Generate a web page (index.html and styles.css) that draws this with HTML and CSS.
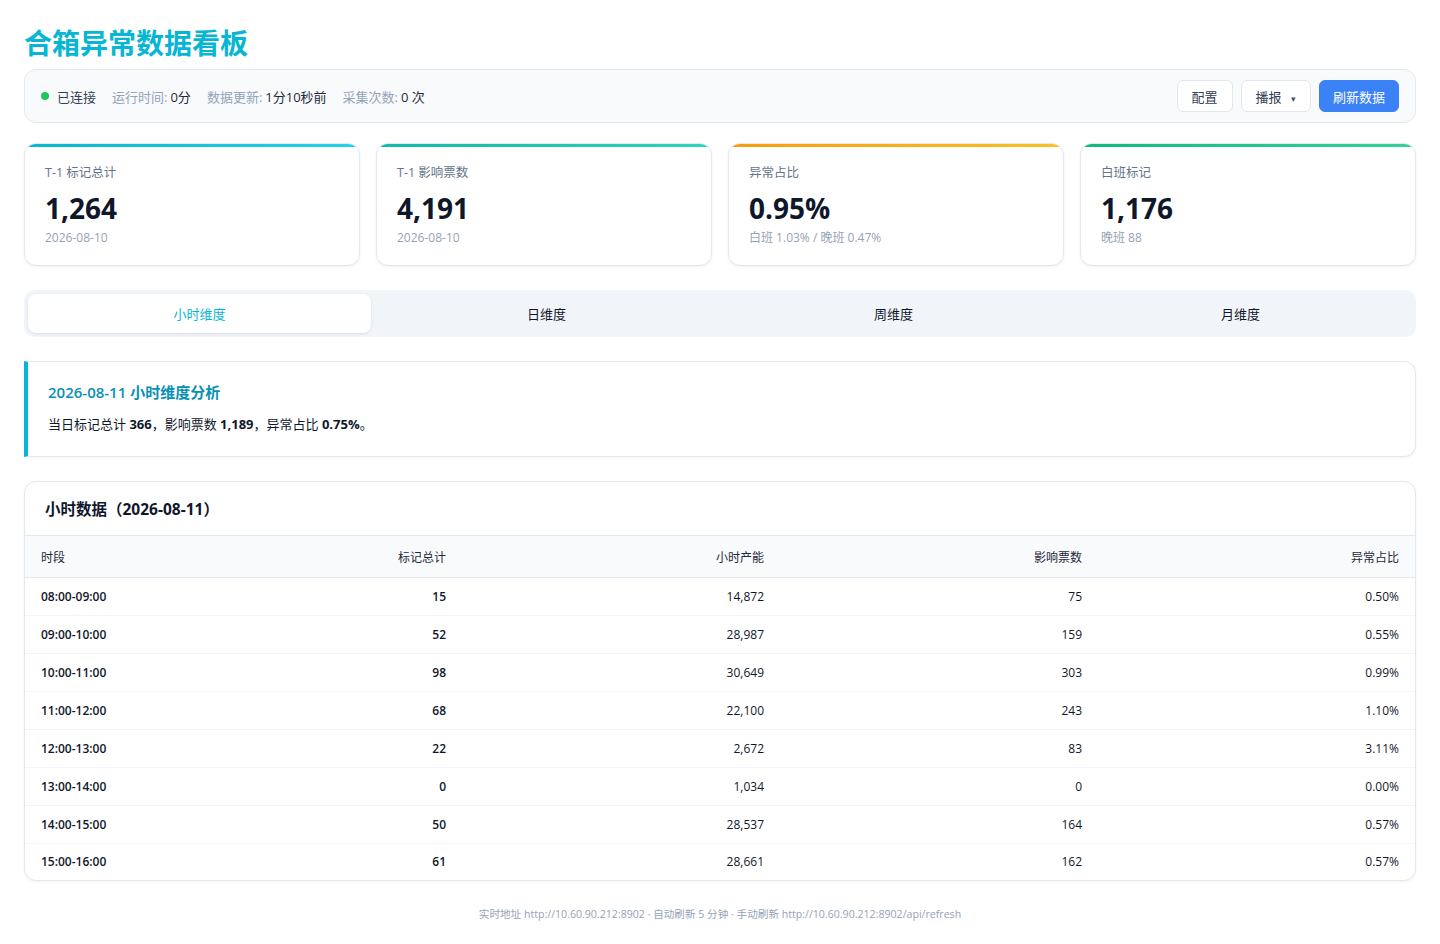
FILE: index.html
```html
<!DOCTYPE html>
<html lang="zh-CN">
<head>
<meta charset="utf-8">
<title>合箱异常数据看板</title>
<link rel="stylesheet" href="styles.css">
</head>
<body>
<div class="page">
  <h1 class="title">合箱异常数据看板</h1>

  <div class="status-bar">
    <div class="status-left">
      <span class="status-item"><span class="dot"></span><span class="conn">已连接</span></span>
      <span class="status-item"><span class="muted">运行时间:</span> <span class="val">0分</span></span>
      <span class="status-item"><span class="muted">数据更新:</span> <span class="val">1分10秒前</span></span>
      <span class="status-item"><span class="muted">采集次数:</span> <span class="val">0 次</span></span>
    </div>
    <div class="status-right">
      <button class="btn">配置</button>
      <button class="btn">播报 <span class="caret">▾</span></button>
      <button class="btn btn-primary">刷新数据</button>
    </div>
  </div>

  <div class="cards">
    <div class="card card-cyan">
      <div class="card-label">T-1 标记总计</div>
      <div class="card-value">1,264</div>
      <div class="card-sub">2026-08-10</div>
    </div>
    <div class="card card-teal">
      <div class="card-label">T-1 影响票数</div>
      <div class="card-value">4,191</div>
      <div class="card-sub">2026-08-10</div>
    </div>
    <div class="card card-amber">
      <div class="card-label">异常占比</div>
      <div class="card-value">0.95%</div>
      <div class="card-sub">白班 1.03% / 晚班 0.47%</div>
    </div>
    <div class="card card-green">
      <div class="card-label">白班标记</div>
      <div class="card-value">1,176</div>
      <div class="card-sub">晚班 88</div>
    </div>
  </div>

  <div class="tabs">
    <div class="tab active">小时维度</div>
    <div class="tab">日维度</div>
    <div class="tab">周维度</div>
    <div class="tab">月维度</div>
  </div>

  <div class="analysis">
    <div class="analysis-title">2026-08-11 小时维度分析</div>
    <div class="analysis-text">当日标记总计 <b>366</b>，影响票数 <b>1,189</b>，异常占比 <b>0.75%</b>。</div>
  </div>

  <div class="table-card">
    <div class="table-title">小时数据（2026-08-11）</div>
    <table class="data">
      <colgroup>
        <col class="c1"><col class="c2"><col class="c3"><col class="c4"><col class="c5">
      </colgroup>
      <thead>
        <tr><th class="l">时段</th><th>标记总计</th><th>小时产能</th><th>影响票数</th><th>异常占比</th></tr>
      </thead>
      <tbody>
        <tr><td class="l b">08:00-09:00</td><td class="b">15</td><td>14,872</td><td>75</td><td>0.50%</td></tr>
        <tr><td class="l b">09:00-10:00</td><td class="b">52</td><td>28,987</td><td>159</td><td>0.55%</td></tr>
        <tr><td class="l b">10:00-11:00</td><td class="b">98</td><td>30,649</td><td>303</td><td>0.99%</td></tr>
        <tr><td class="l b">11:00-12:00</td><td class="b">68</td><td>22,100</td><td>243</td><td>1.10%</td></tr>
        <tr><td class="l b">12:00-13:00</td><td class="b">22</td><td>2,672</td><td>83</td><td>3.11%</td></tr>
        <tr><td class="l b">13:00-14:00</td><td class="b">0</td><td>1,034</td><td>0</td><td>0.00%</td></tr>
        <tr><td class="l b">14:00-15:00</td><td class="b">50</td><td>28,537</td><td>164</td><td>0.57%</td></tr>
        <tr><td class="l b">15:00-16:00</td><td class="b">61</td><td>28,661</td><td>162</td><td>0.57%</td></tr>
      </tbody>
    </table>
  </div>

  <div class="footer">实时地址 http://10.60.90.212:8902 · 自动刷新 5 分钟 · 手动刷新 http://10.60.90.212:8902/api/refresh</div>
</div>
</body>
</html>
```

FILE: styles.css
```css
* { box-sizing: border-box; }
html, body { margin: 0; padding: 0; background: #ffffff; }
body {
  font-family: "Open Sans", "Noto Sans CJK SC", sans-serif;
  color: #0f172a;
  font-size: 13px;
}
.page { padding: 24px 24px 20px; }

.title {
  margin: 0 0 7px;
  font-size: 28px;
  line-height: 38px;
  font-weight: 700;
  color: #06b6d4;
}

.status-bar {
  display: flex;
  align-items: center;
  justify-content: space-between;
  height: 54px;
  padding: 0 16px;
  background: #f8fafc;
  border: 1px solid #e2e8f0;
  border-radius: 12px;
}
.status-left { display: flex; align-items: center; gap: 16px; font-size: 13px; }
.status-item { display: inline-flex; align-items: center; gap: 3px; }
.dot { width: 8px; height: 8px; border-radius: 50%; background: #22c55e; margin-right: 5px; }
.conn { color: #334155; }
.muted { color: #94a3b8; }
.val { color: #1e293b; }
.status-right { display: flex; gap: 8px; }
.btn {
  font-family: inherit;
  font-size: 13px;
  height: 32px;
  padding: 0 14px;
  border: 1px solid #e2e8f0;
  background: #ffffff;
  color: #334155;
  border-radius: 6px;
}
.caret { font-size: 9px; color: #475569; margin-left: 6px; }
.btn-primary { background: #3b82f6; border-color: #3b82f6; color: #ffffff; padding: 0 13px; }

.cards {
  display: grid;
  grid-template-columns: repeat(4, 1fr);
  gap: 16px;
  margin-top: 20px;
}
.card {
  position: relative;
  height: 123px;
  padding: 20px 20px;
  background: #ffffff;
  border: 1px solid #e2e8f0;
  border-radius: 12px;
  overflow: hidden;
  box-shadow: 0 1px 3px rgba(15, 23, 42, 0.06);
}
.card::before {
  content: "";
  position: absolute;
  left: 0; right: 0; top: 0;
  height: 3px;
}
.card-cyan::before { background: linear-gradient(90deg, #06b6d4, #22d3ee); }
.card-teal::before { background: linear-gradient(90deg, #14b8a6, #2dd4bf); }
.card-amber::before { background: linear-gradient(90deg, #f59e0b, #fbbf24); }
.card-green::before { background: linear-gradient(90deg, #10b981, #34d399); }
.card-label { font-size: 12.5px; line-height: 18px; color: #64748b; }
.card-value { font-size: 28px; line-height: 38px; font-weight: 700; color: #0f172a; margin-top: 7px; }
.card-sub { font-size: 12px; line-height: 18px; color: #94a3b8; margin-top: 2px; }

.tabs {
  display: grid;
  grid-template-columns: repeat(4, 1fr);
  gap: 4px;
  padding: 4px;
  margin-top: 24px;
  background: #f1f5f9;
  border-radius: 10px;
}
.tab {
  height: 39px;
  display: flex;
  align-items: center;
  justify-content: center;
  font-size: 13px;
  color: #0f172a;
  border-radius: 8px;
}
.tab.active {
  background: #ffffff;
  color: #06b6d4;
  box-shadow: 0 1px 3px rgba(15, 23, 42, 0.1);
}

.analysis {
  margin-top: 24px;
  height: 96px;
  padding: 19px 20px;
  background: #ffffff;
  border: 1px solid #e2e8f0;
  border-left: 4px solid #06b6d4;
  border-radius: 0 12px 12px 0;
  box-shadow: 0 1px 3px rgba(15, 23, 42, 0.05);
}
.analysis-title { font-size: 15px; line-height: 22px; font-weight: 600; color: #0891b2; }
.analysis-text { font-size: 13px; line-height: 20px; color: #0f172a; margin-top: 11px; }
.analysis-text b { font-weight: 700; }

.table-card {
  margin-top: 24px;
  background: #ffffff;
  border: 1px solid #e2e8f0;
  border-radius: 12px;
  overflow: hidden;
  box-shadow: 0 1px 3px rgba(15, 23, 42, 0.05);
}
.table-title {
  height: 53px;
  display: flex;
  align-items: center;
  padding: 0 20px;
  font-size: 15.5px;
  font-weight: 700;
  color: #0f172a;
}
.data {
  width: 100%;
  border-collapse: collapse;
  table-layout: fixed;
  font-size: 12px;
}
.c1 { width: 119px; }
.c2, .c3, .c4 { width: 318px; }
.c5 { width: auto; }
.data th {
  height: 42px;
  padding: 0 16px;
  text-align: right;
  font-weight: 400;
  color: #1e293b;
  background: #f8fafc;
  border-top: 1px solid #e2e8f0;
  border-bottom: 1px solid #e2e8f0;
}
.data td {
  height: 38px;
  padding: 0 16px;
  text-align: right;
  color: #0f172a;
  border-bottom: 1px solid #f1f5f9;
}
.data tbody tr:last-child td { border-bottom: none; height: 36px; }
.data .l { text-align: left; }
.data .b { font-weight: 600; }

.footer {
  margin-top: 25px;
  text-align: center;
  font-size: 10.6px;
  color: #94a3b8;
}
```
